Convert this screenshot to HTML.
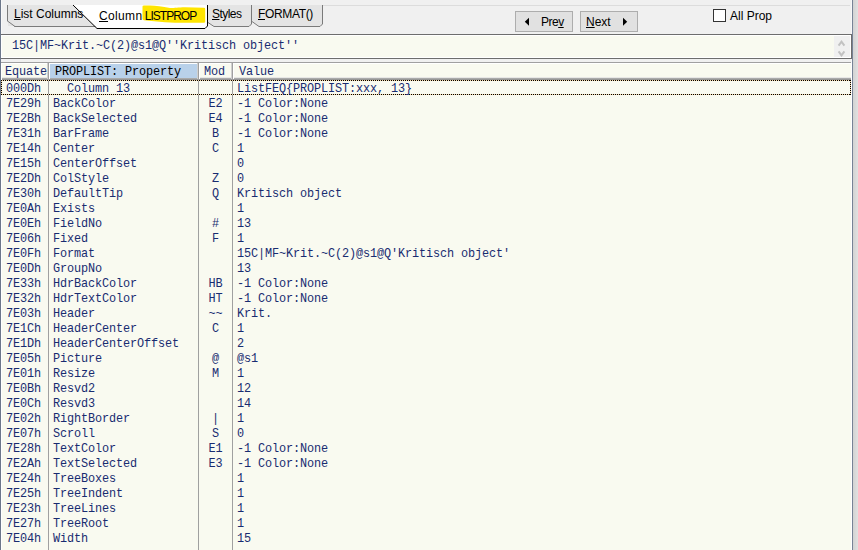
<!DOCTYPE html>
<html><head><meta charset="utf-8">
<style>
*{margin:0;padding:0;box-sizing:border-box}
html,body{width:858px;height:550px;overflow:hidden;background:#F0F0F0;position:relative;font-family:"Liberation Sans",sans-serif}
.a{position:absolute}
.ui{font-family:"Liberation Sans",sans-serif;font-size:12px;color:#000;white-space:pre;line-height:14px}
.mono{font-family:"Liberation Mono",monospace;font-size:11.85px;letter-spacing:-0.11px;color:#182C70;white-space:pre;line-height:15px}
u{text-decoration:underline;text-decoration-thickness:1px;text-underline-offset:1px}
.sp{letter-spacing:-1px;margin-left:-1px}
</style></head><body>
<!-- left & right frame -->
<div class="a" style="left:0;top:0;width:1px;height:550px;background:#6C778A"></div>
<div class="a" style="left:853px;top:0;width:5px;height:550px;background:linear-gradient(90deg,#D3D3D3,#E1E1E1)"></div>
<div class="a" style="left:852px;top:0;width:1px;height:550px;background:#778396"></div>
<div class="a" style="left:851px;top:0;width:1px;height:550px;background:#F8F8F8"></div>
<div class="a" style="left:1px;top:0;width:1px;height:34px;background:#F8F8F8"></div>
<!-- faint top line -->
<div class="a" style="left:323px;top:5px;width:527px;height:1px;background:#DCDCDC"></div>

<!-- tabs -->
<svg class="a" style="left:0;top:0" width="340" height="34">
  <!-- List Columns tab -->
  <path d="M7.5,5 V21 L15,26.5 H100" fill="#E4E4E4" stroke="#7A7A7A" stroke-width="1"/>
  <rect x="8" y="5" width="90" height="21" fill="#E4E4E4"/>
  <path d="M7.5,5 V21 L15,26.5 H100" fill="none" stroke="#7A7A7A" stroke-width="1"/>
  <!-- Styles tab -->
  <path d="M208,5 H251 V26 H214 L208,22 Z" fill="#E4E4E4"/>
  <path d="M208,22.5 L214,26.5 H249 L251.5,24 V5" fill="none" stroke="#7A7A7A"/>
  <!-- FORMAT tab -->
  <path d="M252,5 H322 V26 H259 L252,21 Z" fill="#E4E4E4"/>
  <path d="M252,21.5 L259,26.5 H320 L322.5,24 V5" fill="none" stroke="#7A7A7A"/>
  <!-- selected tab -->
  <path d="M73,5 H207 V26 L205,28 H97 Z" fill="#FFFFFF"/>
  <path d="M73,5 L97,28.5 H205 L207.5,26 V5" fill="none" stroke="#000" stroke-width="1"/>
  <!-- highlight -->
  <path d="M142.5,6.5 Q142.5,5.5 144,5.5 L150,5.6 C156,5.8 162,6.8 170,8 C175,8 178,7.2 185,7.2 L204,7.7 Q205.2,7.8 205.2,9 L205.2,22 Q205.2,22.8 204,22.8 L185,22.8 C178,22.8 172,22.8 165,22.3 C158,21.6 150,20.7 144,20.2 Q142.5,20 142.5,19 Z" fill="#FFE500"/>
</svg>
<div class="a ui" style="left:14px;top:7px"><u>L</u>ist Columns</div>
<div class="a ui" style="left:99px;top:9px"><span style="letter-spacing:0.35px"><u>C</u>olumn</span> <span class="sp">LISTPROP</span></div>
<div class="a ui" style="left:212px;top:7px;letter-spacing:-0.55px"><u>S</u>tyles</div>
<div class="a ui" style="left:258px;top:7px;letter-spacing:-0.35px"><u>F</u>ORMAT()</div>

<!-- buttons -->
<div class="a" style="left:515px;top:11px;width:58px;height:21px;background:#E1E1E1;border:1px solid #ADADAD"></div>
<div class="a" style="left:580px;top:11px;width:58px;height:21px;background:#E1E1E1;border:1px solid #ADADAD"></div>
<svg class="a" style="left:524px;top:17px" width="6" height="10"><path d="M5,0.8 V8.8 L0.8,4.8 Z" fill="#000"/></svg>
<svg class="a" style="left:623px;top:17px" width="6" height="10"><path d="M0,0.8 V8.8 L4.2,4.8 Z" fill="#000"/></svg>
<div class="a ui" style="left:541px;top:15px;letter-spacing:-0.5px">Pre<u>v</u></div>
<div class="a ui" style="left:586px;top:15px"><u>N</u>ext</div>
<!-- checkbox -->
<div class="a" style="left:713px;top:9px;width:13px;height:13px;background:#fff;border:1px solid #333"></div>
<div class="a ui" style="left:730px;top:9px">All Prop</div>

<!-- panel top line -->
<div class="a" style="left:1px;top:34px;width:851px;height:1px;background:#6D6D6D"></div>
<!-- edit field -->
<div class="a" style="left:1px;top:35px;width:850px;height:23px;background:#F9FAF0;border:1px solid #fff"></div>
<div class="a" style="left:851px;top:34px;width:1px;height:25px;background:#6D6D6D"></div>
<div class="a" style="left:1px;top:58px;width:851px;height:1px;background:#6D6D6D"></div>
<div class="a mono" style="left:12px;top:39px">15C|MF~Krit.~C(2)@s1@Q''Kritisch object''</div>
<div class="a" style="left:834px;top:36px;width:16px;height:21px;background:#F0F0F0"></div>
<svg class="a" style="left:834px;top:36px" width="16" height="21">
  <path d="M4.6,9.6 L7.5,5.6 L10.4,9.6" fill="none" stroke="#C2C2C2" stroke-width="2"/>
  <path d="M4.6,15.4 L7.5,19.4 L10.4,15.4" fill="none" stroke="#C2C2C2" stroke-width="2"/>
</svg>
<div class="a" style="left:1px;top:62px;width:850px;height:1px;background:#A0A0A0"></div>

<!-- list -->
<div class="a" style="left:1px;top:63px;width:851px;height:487px;background:#F9FAF0;border-left:1px solid #fff;border-right:1px solid #fff"></div>

<!-- list header -->
<div class="a" style="left:1px;top:63px;width:850px;height:1px;background:#FFFFFF"></div>
<div class="a" style="left:2px;top:77px;width:849px;height:1px;background:#E8E8E6"></div>
<div class="a" style="left:2px;top:78px;width:849px;height:2px;background:linear-gradient(#B4B4B4,#8C8C8C)"></div>
<div class="a" style="left:50px;top:64px;width:147px;height:14px;background:#B9D1EA"></div>
<div class="a" style="left:47px;top:63px;width:1px;height:16px;background:#D0D0D0"></div>
<div class="a" style="left:48px;top:63px;width:1px;height:16px;background:#A0A0A0"></div>
<div class="a" style="left:49px;top:63px;width:1px;height:16px;background:#FFFFFF"></div>
<div class="a" style="left:197px;top:63px;width:1px;height:16px;background:#D0D0D0"></div>
<div class="a" style="left:198px;top:63px;width:1px;height:16px;background:#A0A0A0"></div>
<div class="a" style="left:199px;top:63px;width:1px;height:16px;background:#FFFFFF"></div>
<div class="a" style="left:231px;top:63px;width:1px;height:16px;background:#D0D0D0"></div>
<div class="a" style="left:232px;top:63px;width:1px;height:16px;background:#A0A0A0"></div>
<div class="a" style="left:233px;top:63px;width:1px;height:16px;background:#FFFFFF"></div>
<div class="a mono" style="left:5px;top:65px">Equate</div>
<div class="a mono" style="left:55px;top:65px;color:#000">PROPLIST: Property</div>
<div class="a mono" style="left:204px;top:65px">Mod</div>
<div class="a mono" style="left:239px;top:65px">Value</div>
<!-- column separators -->
<div class="a" style="left:48px;top:79px;width:1px;height:471px;background:#A0A0A0"></div>
<div class="a" style="left:198px;top:79px;width:1px;height:471px;background:#A0A0A0"></div>
<div class="a" style="left:232px;top:79px;width:1px;height:471px;background:#A0A0A0"></div>
<!-- focus rect -->
<div class="a" style="left:1px;top:80px;width:850px;height:1px;background:repeating-linear-gradient(90deg,#000 0 1px,#F6D7A6 1px 2px)"></div>
<div class="a" style="left:1px;top:94px;width:850px;height:1px;background:repeating-linear-gradient(90deg,#000 0 1px,#F6D7A6 1px 2px)"></div>
<div class="a" style="left:1px;top:80px;width:1px;height:15px;background:repeating-linear-gradient(180deg,#000 0 1px,#F6D7A6 1px 2px)"></div>
<div class="a" style="left:850px;top:80px;width:1px;height:15px;background:repeating-linear-gradient(180deg,#000 0 1px,#F6D7A6 1px 2px)"></div>
<div class="a mono" style="left:6px;top:82px">000Dh
7E29h
7E2Bh
7E31h
7E14h
7E15h
7E2Dh
7E30h
7E0Ah
7E0Eh
7E06h
7E0Fh
7E0Dh
7E33h
7E32h
7E03h
7E1Ch
7E1Dh
7E05h
7E01h
7E0Bh
7E0Ch
7E02h
7E07h
7E28h
7E2Ah
7E24h
7E25h
7E23h
7E27h
7E04h</div>
<div class="a mono" style="left:53px;top:82px">  Column 13
BackColor
BackSelected
BarFrame
Center
CenterOffset
ColStyle
DefaultTip
Exists
FieldNo
Fixed
Format
GroupNo
HdrBackColor
HdrTextColor
Header
HeaderCenter
HeaderCenterOffset
Picture
Resize
Resvd2
Resvd3
RightBorder
Scroll
TextColor
TextSelected
TreeBoxes
TreeIndent
TreeLines
TreeRoot
Width</div>
<div class="a mono" style="left:199px;top:82px;width:33px;text-align:center">
E2
E4
B
C

Z
Q

#
F


HB
HT
~~
C

@
M


|
S
E1
E3




</div>
<div class="a mono" style="left:237px;top:82px">ListFEQ{PROPLIST:xxx, 13}
-1 Color:None
-1 Color:None
-1 Color:None
1
0
0
Kritisch object
1
13
1
15C|MF~Krit.~C(2)@s1@Q'Kritisch object'
13
-1 Color:None
-1 Color:None
Krit.
1
2
@s1
1
12
14
1
0
-1 Color:None
-1 Color:None
1
1
1
1
15</div>
</body></html>
